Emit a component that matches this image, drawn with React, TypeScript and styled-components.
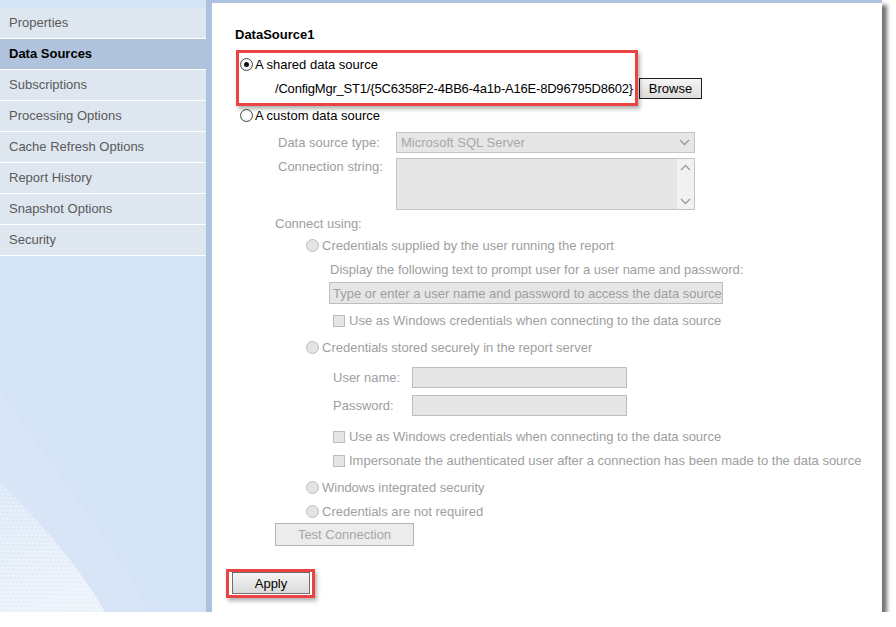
import React from "react";
import styled, { createGlobalStyle } from "styled-components";

const GlobalStyle = createGlobalStyle`
  html, body {
    margin: 0;
    padding: 0;
    background: #ffffff;
  }
  body {
    font-family: "Liberation Sans", Arial, sans-serif;
    font-size: 13px;
  }
`;

const navItems = [
  "Properties",
  "Data Sources",
  "Subscriptions",
  "Processing Options",
  "Cache Refresh Options",
  "Report History",
  "Snapshot Options",
  "Security",
];

const Chevron = ({ up }: { up?: boolean }) => (
  <svg width="11" height="7" viewBox="0 0 11 7">
    <polyline
      points={up ? "1,6 5.5,1.5 10,6" : "1,1 5.5,5.5 10,1"}
      fill="none"
      stroke="#9a9a9a"
      strokeWidth="1.3"
    />
  </svg>
);

const SidebarWave = () => (
  <Wave width="206" height="250" viewBox="0 0 206 250">
    <defs>
      <pattern id="mesh" width="7" height="5" patternUnits="userSpaceOnUse" patternTransform="rotate(-35)">
        <path d="M0 2.5 L3.5 0 L7 2.5 L3.5 5 Z" fill="none" stroke="#ffffff" strokeOpacity="0.75" strokeWidth="0.7" />
      </pattern>
      <linearGradient id="fade" x1="0" y1="0" x2="0.4" y2="1">
        <stop offset="0" stopColor="#ffffff" stopOpacity="0" />
        <stop offset="1" stopColor="#ffffff" stopOpacity="0.45" />
      </linearGradient>
    </defs>
    <path d="M0 30 C 45 95, 105 170, 150 250 L0 250 Z" fill="#ffffff" fillOpacity="0.08" />
    <path d="M0 120 C 40 160, 80 205, 105 250 L0 250 Z" fill="url(#mesh)" />
    <path d="M0 120 C 40 160, 80 205, 105 250 L0 250 Z" fill="url(#fade)" />
  </Wave>
);

const App = () => {
  return (
    <>
      <GlobalStyle />
      <Window>
        <Sidebar>
          <NavList>
            {navItems.map((item) => (
              <NavItem key={item} $active={item === "Data Sources"}>
                {item}
              </NavItem>
            ))}
          </NavList>
          <SidebarWave />
        </Sidebar>

        <Main>
          <Title>DataSource1</Title>

          <SharedGroup>
            <Row $indent={8} $top={0}>
              <Radio $checked />
              A shared data source
            </Row>
            <PathRow>
              <PathText>/ConfigMgr_ST1/{"{5C6358F2-4BB6-4a1b-A16E-8D96795D8602}"}</PathText>
              <BrowseButton>Browse</BrowseButton>
            </PathRow>
            <Highlight />
          </SharedGroup>

          <Row $indent={8} $top={8}>
            <Radio />
            A custom data source
          </Row>

          <FieldGrid>
            <FieldLabel>Data source type:</FieldLabel>
            <SelectBox>
              <span>Microsoft SQL Server</span>
              <Chevron />
            </SelectBox>
            <FieldLabel $top>Connection string:</FieldLabel>
            <TextArea>
              <ScrollColumn>
                <Chevron up />
                <Chevron />
              </ScrollColumn>
            </TextArea>
          </FieldGrid>

          <Row $indent={43} $top={5} $muted>
            Connect using:
          </Row>

          <Row $indent={74} $top={5} $muted>
            <Radio $disabled />
            Credentials supplied by the user running the report
          </Row>
          <Row $indent={98} $top={7} $muted>
            Display the following text to prompt user for a user name and password:
          </Row>
          <PromptInput>Type or enter a user name and password to access the data source</PromptInput>
          <Row $indent={101} $top={8} $muted>
            <Checkbox />
            Use as Windows credentials when connecting to the data source
          </Row>

          <Row $indent={74} $top={10} $muted>
            <Radio $disabled />
            Credentials stored securely in the report server
          </Row>
          <CredRow $top={11}>
            <CredLabel>User name:</CredLabel>
            <CredInput />
          </CredRow>
          <CredRow $top={7}>
            <CredLabel>Password:</CredLabel>
            <CredInput />
          </CredRow>
          <Row $indent={101} $top={12} $muted>
            <Checkbox />
            Use as Windows credentials when connecting to the data source
          </Row>
          <Row $indent={101} $top={7} $muted>
            <Checkbox />
            Impersonate the authenticated user after a connection has been made to the data source
          </Row>

          <Row $indent={74} $top={10} $muted>
            <Radio $disabled />
            Windows integrated security
          </Row>
          <Row $indent={74} $top={7} $muted>
            <Radio $disabled />
            Credentials are not required
          </Row>

          <TestButton disabled>Test Connection</TestButton>

          <ApplyWrap>
            <ApplyButton>Apply</ApplyButton>
            <ApplyHighlight />
          </ApplyWrap>
        </Main>
      </Window>
    </>
  );
};

const Window = styled.div`
  display: flex;
  width: 882px;
  height: 612px;
  background: #ffffff;
  box-shadow: 5px 5px 4px rgba(0, 0, 0, 0.55);
  overflow: hidden;
`;

const Sidebar = styled.div`
  width: 206px;
  flex-shrink: 0;
  border-right: 6px solid #adc2de;
  background: #d4e3f6;
  display: flex;
  flex-direction: column;
  padding-top: 8px;
`;

const NavList = styled.div`
  display: flex;
  flex-direction: column;
`;

const NavItem = styled.div<{ $active?: boolean }>`
  height: 30px;
  line-height: 30px;
  padding-left: 9px;
  border-bottom: 1px solid #ffffff;
  background: ${(p) => (p.$active ? "#afc3dd" : "#dee6f0")};
  color: ${(p) => (p.$active ? "#000000" : "#5a5a5a")};
  font-weight: ${(p) => (p.$active ? "bold" : "normal")};
  white-space: nowrap;
`;

const Wave = styled.svg`
  display: block;
  margin-top: auto;
`;

const Main = styled.div`
  flex: 1;
  border-top: 3px solid #aec3e0;
  padding: 24px 0 0 20px;
  display: flex;
  flex-direction: column;
  align-items: flex-start;
`;

const Title = styled.div`
  margin-left: 3px;
  font-weight: bold;
  line-height: 16px;
  color: #000000;
`;

const Row = styled.div<{ $indent: number; $top: number; $muted?: boolean }>`
  display: flex;
  align-items: center;
  height: 17px;
  margin-left: ${(p) => p.$indent}px;
  margin-top: ${(p) => p.$top}px;
  color: ${(p) => (p.$muted ? "#9e9e9e" : "#000000")};
  white-space: nowrap;
`;

const Radio = styled.span<{ $checked?: boolean; $disabled?: boolean }>`
  box-sizing: border-box;
  width: 13px;
  height: 13px;
  margin-right: ${(p) => (p.$disabled ? 3 : 2)}px;
  border-radius: 50%;
  border: 1px solid ${(p) => (p.$disabled ? "#bdbdbd" : "#4a4a4a")};
  background: ${(p) =>
    p.$disabled ? "#e4e4e4" : "radial-gradient(circle at 50% 40%, #ffffff 30%, #e2e2e2 100%)"};
  display: inline-flex;
  align-items: center;
  justify-content: center;
  flex-shrink: 0;

  &::after {
    content: "";
    display: ${(p) => (p.$checked ? "block" : "none")};
    width: 5px;
    height: 5px;
    border-radius: 50%;
    background: #111111;
  }
`;

const Checkbox = styled.span`
  box-sizing: border-box;
  width: 12px;
  height: 12px;
  margin-right: 4px;
  border: 1px solid #bcbcbc;
  background: #e6e6e6;
  flex-shrink: 0;
`;

const SharedGroup = styled.div`
  position: relative;
  margin-top: 13px;
  display: flex;
  flex-direction: column;
  align-items: flex-start;
`;

const Highlight = styled.div`
  position: absolute;
  left: 4px;
  top: -6px;
  width: 402px;
  height: 56px;
  box-sizing: border-box;
  border: 3px solid #e94443;
  box-shadow: 2px 3px 4px rgba(0, 0, 0, 0.3);
  pointer-events: none;
`;

const PathRow = styled.div`
  display: flex;
  align-items: center;
  height: 21px;
  margin-left: 43px;
  margin-top: 5px;
  color: #000000;
  white-space: nowrap;
`;

const PathText = styled.span`
  letter-spacing: -0.2px;
`;

const BrowseButton = styled.button`
  width: 63px;
  height: 21px;
  margin-left: 6px;
  padding: 0;
  font-family: inherit;
  font-size: 13px;
  color: #000000;
  border: 1px solid #1e1e1e;
  background: linear-gradient(#f5f5f5, #dcdcdc);
`;

const FieldGrid = styled.div`
  display: grid;
  grid-template-columns: 118px 299px;
  row-gap: 5px;
  margin-left: 46px;
  margin-top: 8px;
`;

const FieldLabel = styled.div<{ $top?: boolean }>`
  color: #9e9e9e;
  line-height: 15px;
  align-self: ${(p) => (p.$top ? "start" : "center")};
  padding-top: ${(p) => (p.$top ? 1 : 0)}px;
  white-space: nowrap;
`;

const SelectBox = styled.div`
  box-sizing: border-box;
  height: 21px;
  border: 1px solid #c4c4c4;
  background: #e6e6e6;
  color: #a8a8a8;
  display: flex;
  align-items: center;
  justify-content: space-between;
  padding: 0 4px 0 4px;
`;

const TextArea = styled.div`
  box-sizing: border-box;
  height: 52px;
  border: 1px solid #c4c4c4;
  background: #e6e6e6;
  display: flex;
  justify-content: flex-end;
`;

const ScrollColumn = styled.div`
  width: 17px;
  background: #f1f1f1;
  display: flex;
  flex-direction: column;
  justify-content: space-between;
  align-items: center;
  padding: 5px 0 4px;
`;

const PromptInput = styled.div`
  box-sizing: border-box;
  width: 394px;
  height: 22px;
  margin-left: 97px;
  margin-top: 4px;
  padding-left: 3px;
  border: 1px solid #bdbdbd;
  background: #e6e6e6;
  color: #9e9e9e;
  display: flex;
  align-items: center;
  white-space: nowrap;
`;

const CredRow = styled.div<{ $top: number }>`
  display: flex;
  align-items: center;
  height: 21px;
  margin-left: 101px;
  margin-top: ${(p) => p.$top}px;
`;

const CredLabel = styled.div`
  width: 79px;
  color: #9e9e9e;
`;

const CredInput = styled.div`
  box-sizing: border-box;
  width: 215px;
  height: 21px;
  border: 1px solid #bdbdbd;
  background: #e6e6e6;
`;

const TestButton = styled.button`
  width: 139px;
  height: 23px;
  margin-left: 43px;
  margin-top: 3px;
  padding: 0;
  font-family: inherit;
  font-size: 13px;
  color: #a6a6a6;
  border: 1px solid #b4b4b4;
  background: #ececec;
`;

const ApplyWrap = styled.div`
  position: relative;
  margin-top: 26px;
`;

const ApplyButton = styled.button`
  display: block;
  width: 78px;
  height: 22px;
  padding: 0;
  font-family: inherit;
  font-size: 13px;
  color: #000000;
  border: 1px solid #6e6e6e;
  background: linear-gradient(#f4f4f4, #dadada);
`;

const ApplyHighlight = styled.div`
  position: absolute;
  left: -6px;
  top: -3px;
  width: 89px;
  height: 29px;
  box-sizing: border-box;
  border: 3px solid #e94443;
  box-shadow: 2px 3px 4px rgba(0, 0, 0, 0.3);
  pointer-events: none;
`;

export default App;
